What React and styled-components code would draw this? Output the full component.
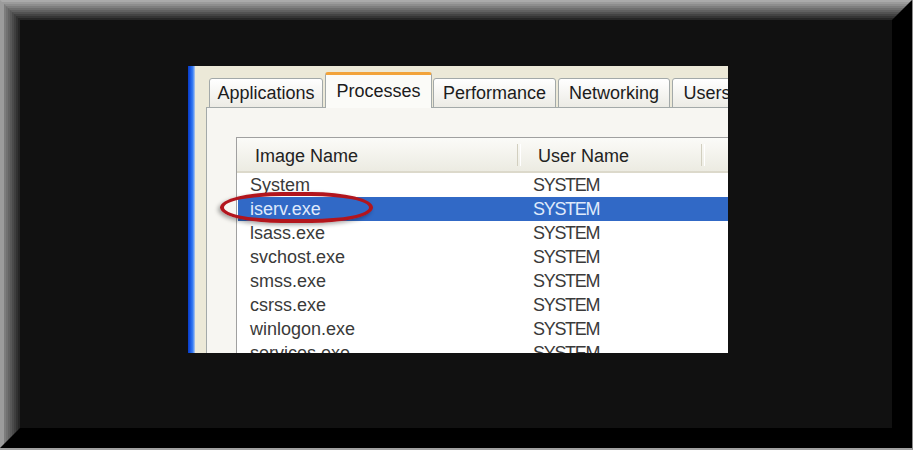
import React from 'react';
import styled, { createGlobalStyle } from 'styled-components';

const GlobalStyle = createGlobalStyle`
  * {
    margin: 0;
    padding: 0;
    box-sizing: border-box;
  }

  body {
    background: #000;
    font-family: 'Liberation Sans', Arial, sans-serif;
  }
`;

const Frame = styled.div`
  width: 913px;
  height: 450px;
  display: flex;
  background: #000;
  border-right: 1px solid #8c8c8c;
  border-bottom: 2px solid #a2a2a2;
`;

// one 2px step of the bevel; nested rings give the shaded, mitred edge
const Ring = styled.div`
  flex: 1;
  display: flex;
  border-style: solid;
  border-width: 2px;
  border-color: ${p => p.$top} #000 #000 ${p => p.$left};
`;

const Canvas = styled.div`
  flex: 1;
  background: #111;
  padding: 46px 0 0 168px;
  overflow: hidden;
`;

const Window = styled.div`
  position: relative;
  width: 540px;
  height: 287px;
  display: flex;
  overflow: hidden;
`;

const BlueEdge = styled.div`
  width: 7px;
  flex: none;
  background: linear-gradient(90deg, #0a3cc4 0%, #1553e0 30%, #3a80f5 70%, #b5cbee 100%);
`;

const Body = styled.div`
  flex: 1;
  min-width: 0;
  display: flex;
  flex-direction: column;
  background: #ece9d8;
  padding: 6px 0 0 11px;
`;

const TabStrip = styled.div`
  display: flex;
  align-items: flex-end;
  height: 36px;
  padding-left: 3px;
  margin-bottom: -1px;
  position: relative;
  z-index: 1;
`;

const Tab = styled.div`
  flex: none;
  width: ${p => p.$w}px;
  height: ${p => (p.$active ? 36 : 30)}px;
  margin-right: ${p => p.$gap}px;
  display: flex;
  align-items: center;
  justify-content: center;
  padding-top: ${p => (p.$active ? 0 : 1)}px;
  font-size: 18px;
  color: #1c1c1c;
  white-space: nowrap;
  border: 1px solid #a3a9a9;
  border-top: ${p => (p.$active ? '3px solid #f2a33a' : '1px solid #a3a9a9')};
  border-bottom: ${p => (p.$active ? 'none' : '1px solid #a3a9a9')};
  border-radius: 3px 3px 0 0;
  background: ${p => (p.$active ? '#fbfbf8' : 'linear-gradient(#ffffff, #ecebe5)')};
`;

const Panel = styled.div`
  flex: 1;
  display: flex;
  padding: 29px 0 0 29px;
  background: #f7f6f2;
  border: 1px solid #a3a9a9;
  border-right: none;
`;

const List = styled.div`
  flex: 1;
  background: #fff;
  border-left: 1px solid #a0a0a0;
  border-top: 1px solid #a0a0a0;
`;

const Header = styled.div`
  display: flex;
  height: 35px;
  padding-top: 3px;
  background: linear-gradient(#fbfbf8, #ecebe2);
  border-bottom: 2px solid #dcd9cb;
`;

const HeaderCell = styled.div`
  position: relative;
  flex: ${p => (p.$w ? 'none' : '1')};
  width: ${p => (p.$w ? `${p.$w}px` : 'auto')};
  display: flex;
  align-items: center;
  padding-left: ${p => p.$pad}px;
  font-size: 18px;
  color: #222;

  &::after {
    content: '';
    position: absolute;
    right: 0;
    top: 3px;
    bottom: 5px;
    width: 2px;
    border-left: 1px solid #d2cfbf;
    border-right: 1px solid #fff;
    display: ${p => (p.$w ? 'block' : 'none')};
  }
`;

const Row = styled.div`
  display: flex;
  height: 24px;
  margin: 0 0 0 1px;
  background: ${p => (p.$selected ? '#3169c6' : 'transparent')};
  color: ${p => (p.$selected ? '#dfe9fb' : '#3a3a3a')};
`;

const Cell = styled.div`
  flex: none;
  width: ${p => p.$w}px;
  padding-left: 12px;
  font-size: 18px;
  line-height: 24px;
  white-space: nowrap;
  letter-spacing: ${p => (p.$caps ? '-1.3px' : '0')};
`;

const Circle = styled.div`
  position: absolute;
  left: 32px;
  top: 126px;
  width: 153px;
  height: 31px;
  border: 4px solid #b2151d;
  border-radius: 64px / 16px;
  box-shadow: -2px 2px 4px rgba(0, 0, 0, 0.35);
  pointer-events: none;
`;

const tabs = [
  { label: 'Applications', w: 114, gap: 2 },
  { label: 'Processes', w: 107, gap: 1, active: true },
  { label: 'Performance', w: 123, gap: 2 },
  { label: 'Networking', w: 112, gap: 2 },
  { label: 'Users', w: 70, gap: 0 },
];

const processes = [
  'System',
  'iserv.exe',
  'lsass.exe',
  'svchost.exe',
  'smss.exe',
  'csrss.exe',
  'winlogon.exe',
  'services.exe',
];

const STEPS = 10;
const mix = (a, b, t) => Math.round(a + (b - a) * t);
const grey = v => `rgb(${v}, ${v}, ${v})`;

function Bevel({ children }) {
  let inner = children;
  for (let i = STEPS - 1; i >= 0; i--) {
    const t = i / (STEPS - 1);
    inner = (
      <Ring $top={grey(mix(170, 38, t))} $left={grey(i < 2 ? 156 : mix(150, 38, t))}>
        {inner}
      </Ring>
    );
  }
  return inner;
}

function App() {
  return (
    <>
      <GlobalStyle />
      <Frame>
        <Bevel>
          <Canvas>
            <Window>
              <BlueEdge />
              <Body>
                <TabStrip>
                  {tabs.map(t => (
                    <Tab key={t.label} $w={t.w} $gap={t.gap} $active={t.active}>
                      {t.label}
                    </Tab>
                  ))}
                </TabStrip>
                <Panel>
                  <List>
                    <Header>
                      <HeaderCell $w={284} $pad={18}>Image Name</HeaderCell>
                      <HeaderCell $w={184} $pad={17}>User Name</HeaderCell>
                      <HeaderCell $pad={12} />
                    </Header>
                    {processes.map(name => (
                      <Row key={name} $selected={name === 'iserv.exe'}>
                        <Cell $w={283}>{name}</Cell>
                        <Cell $w={184} $caps>SYSTEM</Cell>
                      </Row>
                    ))}
                  </List>
                </Panel>
              </Body>
              <Circle />
            </Window>
          </Canvas>
        </Bevel>
      </Frame>
    </>
  );
}

export default App;
